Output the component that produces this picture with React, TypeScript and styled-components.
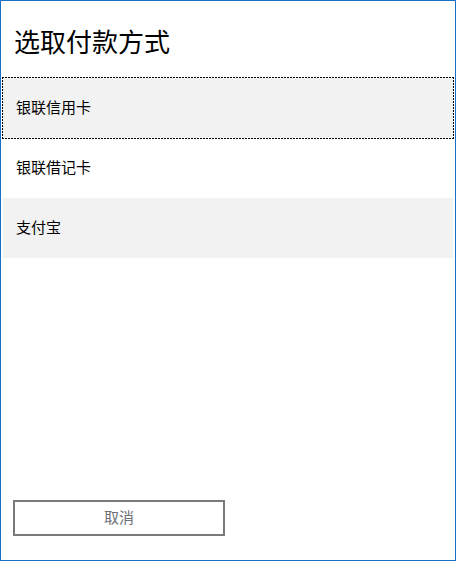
import React, { useState } from "react";
import styled, { createGlobalStyle, css } from "styled-components";

const Global = createGlobalStyle`
  html, body { margin: 0; padding: 0; background: #ffffff; }
  * { box-sizing: border-box; }
  body { font-family: "Noto Sans CJK SC", "Noto Sans", sans-serif; }
`;

const Window = styled.div`
  width: 456px;
  height: 561px;
  border: 1px solid #1570c4;
  background: #ffffff;
  display: flex;
  flex-direction: column;
`;

const Title = styled.h1`
  margin: 0;
  padding: 23px 13px 20px;
  font-size: 26px;
  line-height: 34px;
  font-weight: 400;
  color: #000000;
`;

const List = styled.ul`
  list-style: none;
  margin: 0;
  padding: 0;
  display: flex;
  flex-direction: column;
`;

const focusRing = css`
  &::after {
    content: "";
    position: absolute;
    inset: -1px;
    pointer-events: none;
    background:
      repeating-linear-gradient(90deg, #000 0 2px, transparent 2px 3px) top / 100% 1px no-repeat,
      repeating-linear-gradient(90deg, #000 0 2px, transparent 2px 3px) bottom / 100% 1px no-repeat,
      repeating-linear-gradient(0deg, #000 0 2px, transparent 2px 3px) left / 1px 100% no-repeat,
      repeating-linear-gradient(0deg, #000 0 2px, transparent 2px 3px) right / 1px 100% no-repeat;
  }
`;

const Item = styled.li<{ $shaded?: boolean; $focused?: boolean }>`
  position: relative;
  margin: 0 2px;
  height: 60px;
  padding: 0 0 4px 13px;
  display: flex;
  align-items: center;
  font-size: 15px;
  color: #000000;
  background: ${(p) => (p.$shaded ? "#f2f2f2" : "transparent")};
  cursor: default;
  ${(p) => (p.$focused ? focusRing : "")}
`;

const Footer = styled.div`
  margin-top: auto;
  padding: 0 12px 24px;
`;

const CancelButton = styled.button`
  width: 212px;
  height: 36px;
  border: 2px solid #7a7a7a;
  background: #ffffff;
  color: #6f6f78;
  font-family: "Noto Sans CJK SC", "Noto Sans", sans-serif;
  font-size: 15px;
  padding: 0 0 4px;
  display: flex;
  align-items: center;
  justify-content: center;
`;

const methods = ["银联信用卡", "银联借记卡", "支付宝"];

export default function App() {
  const [focused] = useState(0);
  return (
    <>
      <Global />
      <Window>
        <Title>选取付款方式</Title>
        <List>
          {methods.map((m, i) => (
            <Item key={m} $shaded={i === 0 || i === 2} $focused={i === focused}>
              {m}
            </Item>
          ))}
        </List>
        <Footer>
          <CancelButton>取消</CancelButton>
        </Footer>
      </Window>
    </>
  );
}
